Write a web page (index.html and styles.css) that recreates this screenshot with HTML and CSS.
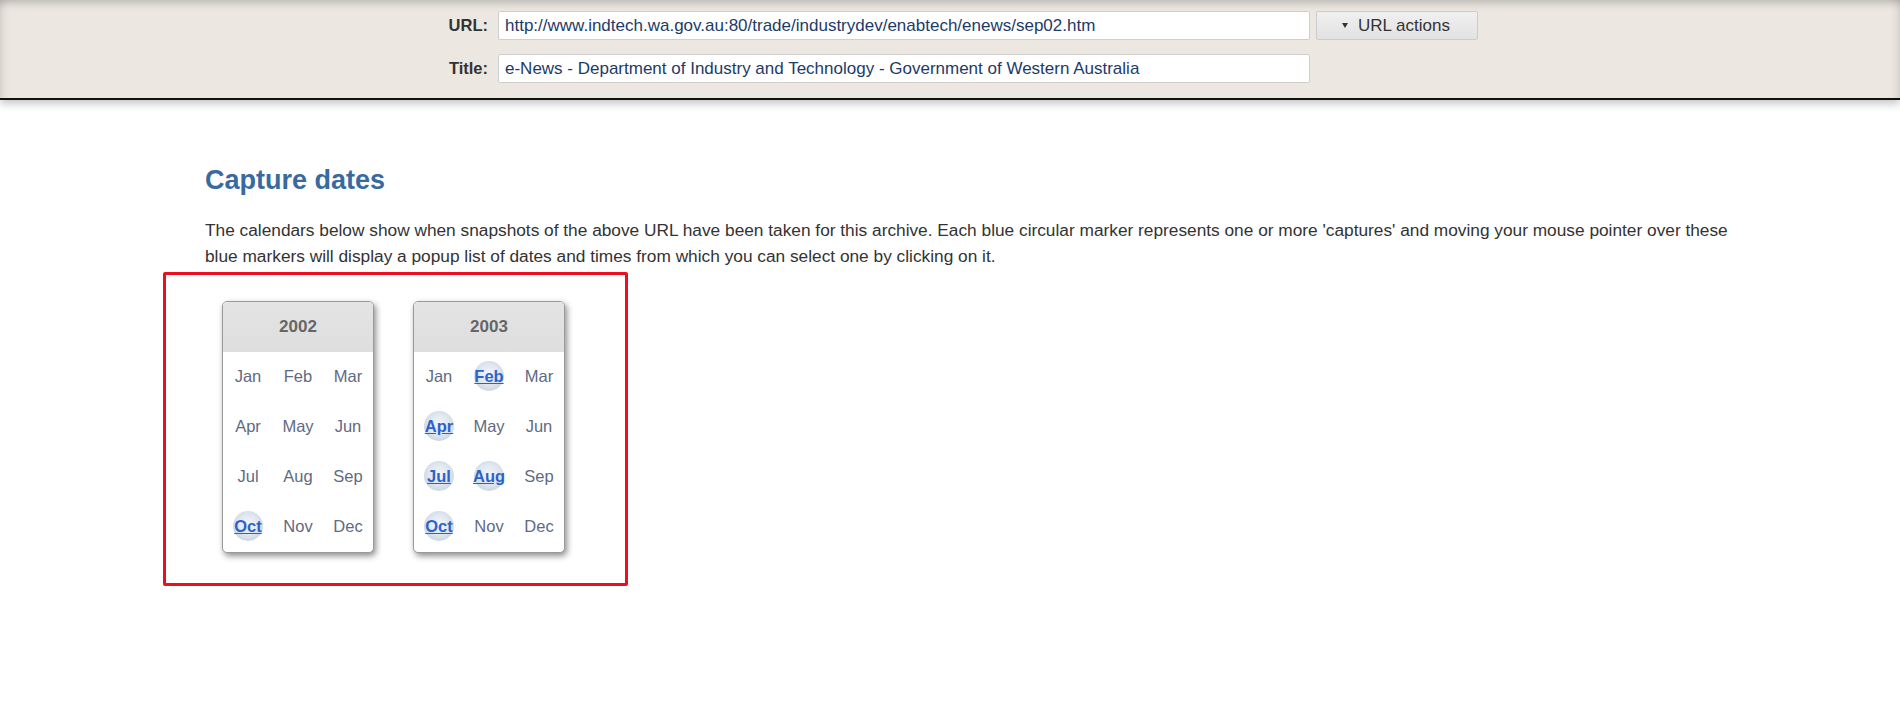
FILE: index.html
```html
<!DOCTYPE html>
<html lang="en">
<head>
<meta charset="utf-8">
<title>Capture dates</title>
<link rel="stylesheet" href="styles.css">
</head>
<body>
<header class="topbar">
  <div class="urlform">
    <label class="lbl">URL:</label>
    <div class="field">http://www.indtech.wa.gov.au:80/trade/industrydev/enabtech/enews/sep02.htm</div>
    <button class="actions"><span class="tri"></span>URL actions</button>
    <label class="lbl">Title:</label>
    <div class="field">e-News - Department of Industry and Technology - Government of Western Australia</div>
  </div>
</header>
<main class="content">
  <h1 class="title">Capture dates</h1>
  <p class="intro">The calendars below show when snapshots of the above URL have been taken for this archive. Each blue circular marker represents one or more 'captures' and moving your mouse pointer over these blue markers will display a popup list of dates and times from which you can select one by clicking on it.</p>
  <div class="calbox">
    <div class="cal">
      <div class="year">2002</div>
      <div class="months">
        <span class="m">Jan</span><span class="m">Feb</span><span class="m">Mar</span>
        <span class="m">Apr</span><span class="m">May</span><span class="m">Jun</span>
        <span class="m">Jul</span><span class="m">Aug</span><span class="m">Sep</span>
        <span class="m"><a class="cap" href="#">Oct</a></span><span class="m">Nov</span><span class="m">Dec</span>
      </div>
    </div>
    <div class="cal">
      <div class="year">2003</div>
      <div class="months">
        <span class="m">Jan</span><span class="m"><a class="cap" href="#">Feb</a></span><span class="m">Mar</span>
        <span class="m"><a class="cap" href="#">Apr</a></span><span class="m">May</span><span class="m">Jun</span>
        <span class="m"><a class="cap" href="#">Jul</a></span><span class="m"><a class="cap" href="#">Aug</a></span><span class="m">Sep</span>
        <span class="m"><a class="cap" href="#">Oct</a></span><span class="m">Nov</span><span class="m">Dec</span>
      </div>
    </div>
  </div>
</main>
</body>
</html>
```
FILE: styles.css
```css
html, body {
  margin: 0;
  padding: 0;
  background: #fff;
  font-family: "Liberation Sans", Arial, sans-serif;
  color: #333;
}

.topbar {
  height: 98px;
  background: #ece8e1;
  border-bottom: 2px solid #111;
  box-shadow: inset 0 9px 9px -6px rgba(0, 0, 0, 0.22),
              inset 10px 0 10px -8px rgba(0, 0, 0, 0.12),
              inset -10px 0 10px -8px rgba(0, 0, 0, 0.12),
              0 4px 8px rgba(0, 0, 0, 0.22);
  position: relative;
  z-index: 1;
}

.urlform {
  display: grid;
  grid-template-columns: 80px 812px 162px;
  column-gap: 10px;
  row-gap: 14px;
  padding: 11px 0 0 408px;
  align-items: center;
}

.lbl {
  text-align: right;
  font-weight: bold;
  font-size: 16.5px;
  color: #333;
}

.field {
  height: 27px;
  line-height: 27px;
  background: #fff;
  border: 1px solid #cfcfcf;
  border-radius: 2px;
  padding: 0 6px;
  font-size: 17px;
  color: #1d3b68;
  white-space: nowrap;
  overflow: hidden;
}

.actions {
  margin-left: -4px;
  height: 29px;
  width: 162px;
  border: 1px solid #ccc;
  border-radius: 2px;
  background: linear-gradient(#f0f0f0, #e2e2e2);
  font-family: "Liberation Sans", Arial, sans-serif;
  font-size: 17px;
  color: #333;
  display: flex;
  align-items: center;
  justify-content: center;
  gap: 10px;
  padding: 0 2px 0 0;
}

.tri {
  width: 0;
  height: 0;
  border-left: 3.5px solid transparent;
  border-right: 3.5px solid transparent;
  border-top: 5px solid #333;
}

.content {
  padding: 0 150px 0 205px;
}

.title {
  margin: 65px 0 0 0;
  font-size: 27px;
  font-weight: bold;
  color: #386aa0;
  line-height: 31px;
}

.intro {
  margin: 22px 0 0 0;
  font-size: 17.3px;
  line-height: 25.5px;
  color: #333;
}

.calbox {
  margin: 3px 0 0 -42px;
  width: 345px;
  border: 3px solid #ec0f1f;
  border-radius: 2px;
  padding: 26px 58px 30px 56px;
  display: flex;
  gap: 39px;
}

.cal {
  width: 150px;
  border: 1px solid #9a9a9a;
  border-radius: 5px;
  overflow: hidden;
  background: #fff;
  box-shadow: 2px 3px 6px rgba(0, 0, 0, 0.45);
}

.year {
  height: 50px;
  line-height: 50px;
  text-align: center;
  background: linear-gradient(#e4e4e4, #dedede);
  font-weight: bold;
  font-size: 17px;
  color: #666;
}

.months {
  display: grid;
  grid-template-columns: repeat(3, 50px);
  grid-auto-rows: 50px;
}

.m {
  display: flex;
  align-items: center;
  justify-content: center;
  font-size: 16.5px;
  color: #606a82;
  padding-bottom: 2px;
  box-sizing: border-box;
}

.cap {
  width: 30px;
  height: 30px;
  border-radius: 50%;
  display: flex;
  align-items: center;
  justify-content: center;
  background: radial-gradient(circle at 50% 45%, #f5f7fa 0%, #e0e7f0 45%, #b9c8da 100%);
  color: #2d63c8;
  font-weight: bold;
  text-decoration: underline;
}
```
